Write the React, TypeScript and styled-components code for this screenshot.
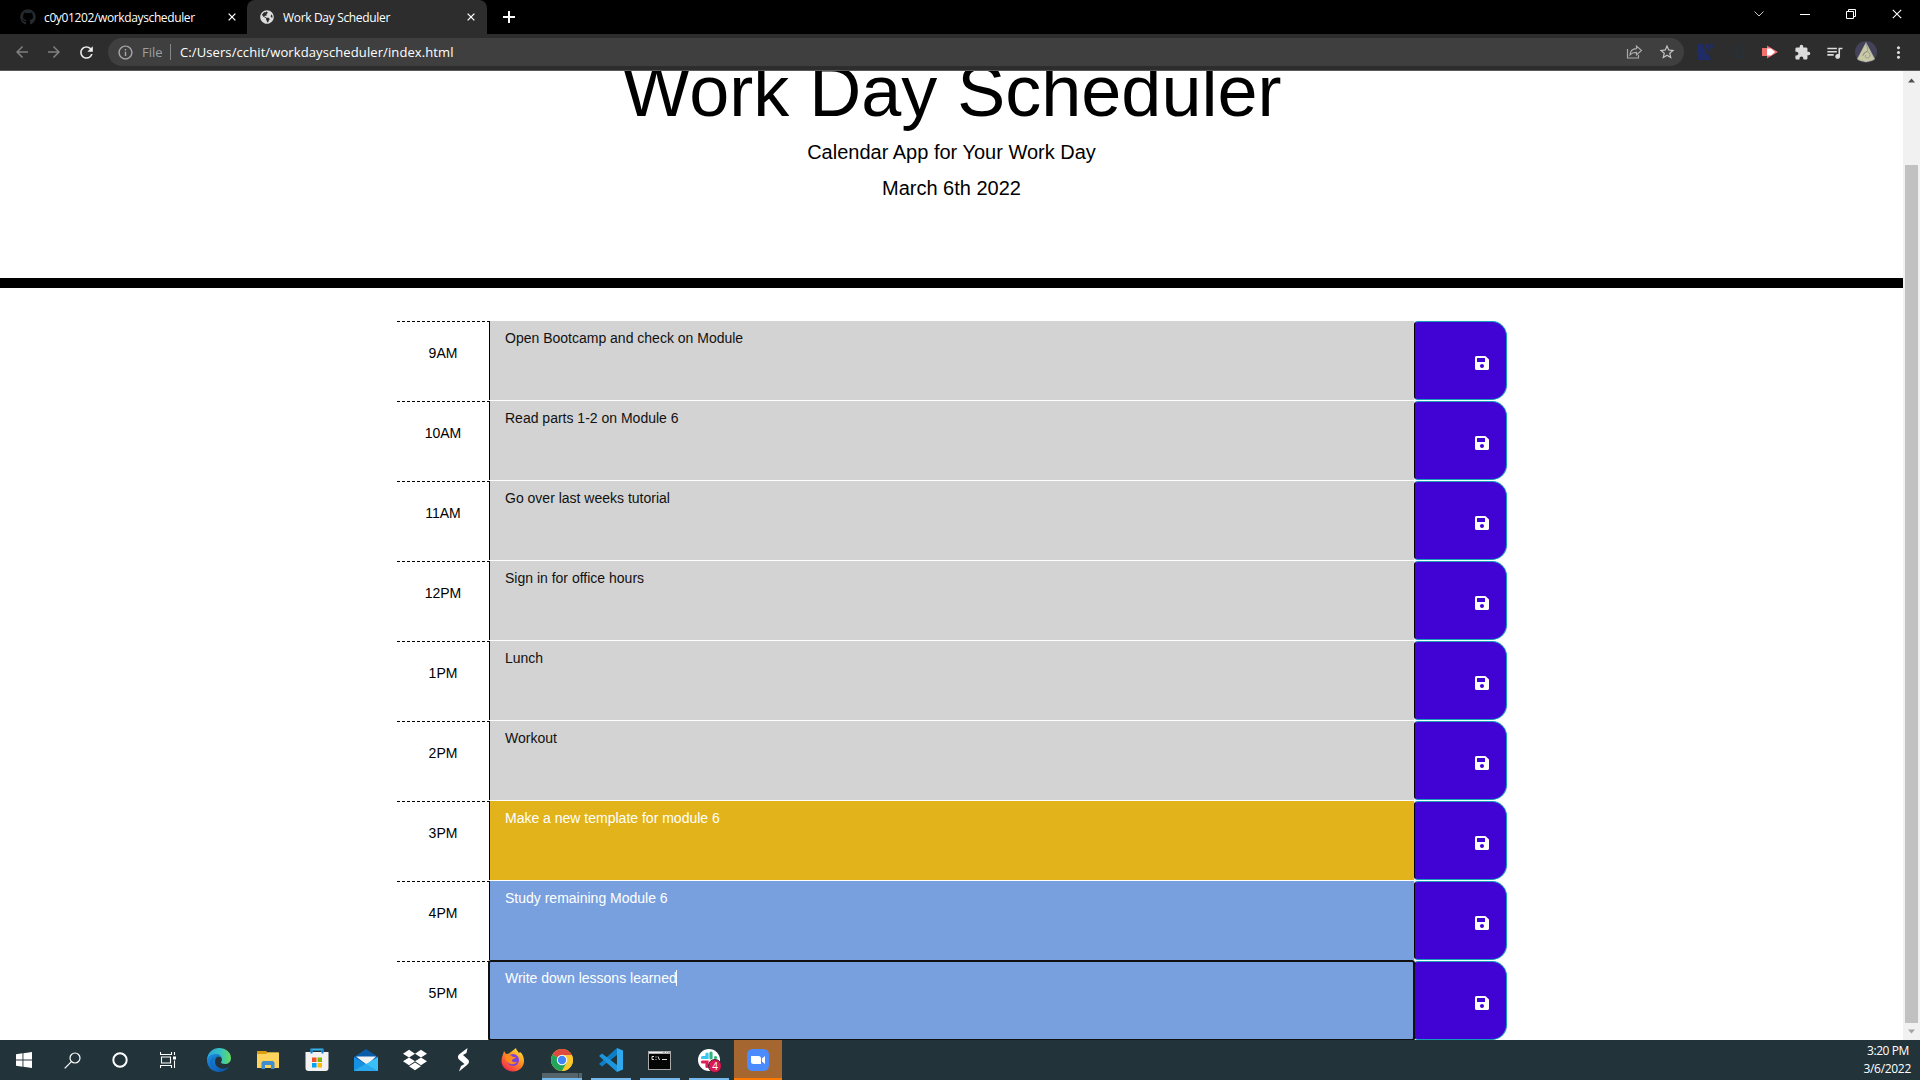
import React from "react";
import styled, { createGlobalStyle } from "styled-components";
import { FaGithub, FaSave, FaDropbox, FaGlobeAmericas } from "react-icons/fa";
import { MdExtension, MdQueueMusic, MdRefresh, MdArrowBack, MdArrowForward, MdInfoOutline, MdStarBorder, MdMoreVert } from "react-icons/md";

const Global = createGlobalStyle`
  * { box-sizing: border-box; }
  html, body { margin: 0; padding: 0; overflow: hidden; }
  svg { display: block; flex: none; }
`;

const ui = `"Open Sans", "Noto Sans", sans-serif`;

const Screen = styled.div`
  width: 1920px; height: 1080px; display: flex; flex-direction: column; overflow: hidden;
  background: #fff; font-family: "Liberation Sans", Arial, sans-serif; color: #000;
`;
const TabStrip = styled.div`
  height: 34px; flex: none; background: #000; display: flex; font-family: ${ui};
`;
const Tab = styled.div<{ $active?: boolean }>`
  width: ${(p) => (p.$active ? 240 : 247)}px; height: 34px; display: flex; align-items: center;
  padding: ${(p) => (p.$active ? "0 12px 0 13px" : "0 11px 0 20px")};
  background: ${(p) => (p.$active ? "#2d2d2d" : "transparent")};
  border-radius: 8px 8px 0 0; color: #fff; font-size: 12px;
`;
const TabTitle = styled.span<{ $gap: number; $spacing: number }>`
  margin-left: ${(p) => p.$gap}px; flex: 1; white-space: nowrap; letter-spacing: ${(p) => p.$spacing}px;
`;
const NewTab = styled.div`width: 44px; display: flex; align-items: center; justify-content: center;`;
const WindowButtons = styled.div`
  margin-left: auto; display: flex; height: 28px;
`;
const WindowButton = styled.div`width: 46px; display: flex; align-items: center; justify-content: center;`;

const Toolbar = styled.div`
  height: 37px; flex: none; background: #2d2d2d; border-bottom: 1px solid #5a5a5a;
  display: flex; align-items: center; font-family: ${ui};
`;
const NavButtons = styled.div`display: flex; gap: 14px; padding-left: 13px; width: 108px;`;
const Address = styled.div`
  width: 1576px; height: 28px; border-radius: 14px; background: #3f3f3f; display: flex; align-items: center;
  padding: 0 8px 0 9px; font-size: 13px; color: #fff;
`;
const Scheme = styled.span`color: #9aa0a6; margin-left: 8px; width: 28px; font-size: 13px; letter-spacing: 0;`;
const Divider = styled.span`width: 1px; height: 16px; background: #84878a; margin-right: 9px;`;
const Url = styled.span`flex: 1; letter-spacing: 0.1px;`;
const AddressIcons = styled.div`display: flex; gap: 15px; align-items: center;`;
const Extensions = styled.div`display: flex; align-items: center; padding-left: 6px;`;
const ExtensionSlot = styled.div`width: 32px; display: flex; justify-content: center;`;

const Viewport = styled.div`height: 969px; flex: none; display: flex; overflow: hidden;`;
const Page = styled.main`width: 1903px; flex: none;`;
const Hero = styled.header`
  height: 217px; border-bottom: 10px solid #000; text-align: center; overflow: hidden;
`;
const Title = styled.h1`font-size: 72px; font-weight: 400; line-height: 86px; margin: -23px 0 3px; padding-left: 1px;`;
const Lead = styled.p`font-size: 20px; line-height: 30px; margin: 0 0 6px;`;

const Schedule = styled.section`margin: 33px 0 0 397px; width: 1110px; font-size: 14px; line-height: 21px;`;
const Row = styled.div`display: grid; grid-template-columns: 93px 924px 93px; height: 80px;`;
const Hour = styled.div`
  height: 79px; border-top: 1px dashed #000; border-right: 1px solid #000; padding-top: 21px; text-align: center;
`;
const tones = {
  past: ["#d3d3d3", "#111"],
  present: ["#e2b31b", "#fff"],
  future: ["#78a0de", "#fff"],
};
type Tone = keyof typeof tones;
const Task = styled.div<{ $tone: Tone; $focused: boolean }>`
  height: 79px; padding: 7px 15px; display: flex; align-items: flex-start;
  background: ${(p) => tones[p.$tone][0]}; color: ${(p) => tones[p.$tone][1]};
  ${(p) => p.$focused && "outline: 2px solid #101010; outline-offset: -1px; border-radius: 2px; margin: 0 0 0 -1px; padding-left: 16px; position: relative; z-index: 1;"}
`;
const Caret = styled.span`width: 1px; height: 16px; margin: 2px 0 0 -1px; background: #fff;`;
const Save = styled.button`
  height: 79px; border: 1px solid #14a0bb; border-left-color: #000; border-radius: 4px 15px 15px 4px; background: #4103d4;
  color: #fff; display: flex; align-items: center; justify-content: flex-end; padding: 5px 16px 0 0;
`;

const Scrollbar = styled.div`
  width: 17px; background: #f1f1f1; display: flex; flex-direction: column; align-items: center; padding: 7px 0 7px;
`;
const Thumb = styled.div`width: 13px; height: 858px; margin: 82px 0 6px; background: #c1c1c1; flex: none;`;

const Taskbar = styled.footer`
  height: 40px; flex: none; display: flex; background: #22333a; color: #fff; font-family: ${ui};
`;
const SystemSlot = styled.div`width: 48px; display: flex; align-items: center; justify-content: center;`;
const Apps = styled.div`display: flex; margin-left: 3px;`;
const AppSlot = styled.div<{ $state?: "open" | "stacked" | "alert" }>`
  width: 49px; height: 40px; display: flex; justify-content: center; align-items: center; position: relative;
  padding-right: ${(p) => (p.$state === "alert" ? 0 : 2)}px;
  ${(p) => p.$state === "alert" && "background: #a5672f; width: 48px;"}
  &::before {
    content: ""; position: absolute; bottom: 2px; left: 4px; width: 40px; height: 5px;
    background: ${(p) => (p.$state === "stacked" ? "linear-gradient(90deg, #56646b 36px, #36464d 36px 37px, #56646b 37px)" : "none")};
  }
  &::after {
    content: ""; position: absolute; bottom: 0; height: 2px;
    left: ${(p) => (p.$state === "alert" ? 0 : 4)}px; width: ${(p) => (p.$state === "alert" ? 48 : 40)}px;
    background: ${(p) => (p.$state === "alert" ? "#ff7800" : p.$state ? "#76b9ed" : "none")};
  }
`;
const Badge = styled.span`
  position: absolute; left: 23px; top: 19px; width: 14px; height: 14px; border-radius: 50%; background: #d81b55;
  border: 1px solid #4b1a30; font-size: 10px; line-height: 12px; text-align: center;
`;
const Clock = styled.div`
  margin-left: auto; width: 80px; padding: 2px 9px 0 0; font-size: 12px; line-height: 18px; text-align: right; letter-spacing: -0.3px;
`;
const Time = styled.div`padding-right: 2px; letter-spacing: -0.4px;`;

const Close = ({ s = 8, w = 1.6 }: { s?: number; w?: number }) => (
  <svg width={s} height={s} viewBox="0 0 10 10" stroke="#fff" strokeWidth={w}><path d="M.8.8l8.4 8.4M9.2.8L.8 9.2" /></svg>
);

const ShareIcon = () => (
  <svg width="17" height="16" viewBox="0 0 17 16" fill="none" stroke="#aaa" strokeWidth="1.2">
    <path d="M1.5 5v9h11v-3" /><path d="M4 10.8c.3-4 2.500-6 6.500-6.200V2l5 4.500-5 4.500V8.400C7.500 8.300 5.500 9 4 10.800z" />
  </svg>
);
const WordExtension = () => (
  <svg width="16" height="16" viewBox="0 0 16 16" fill="#1f2c66"><path d="M0 0h4.500l1.500 5V16H0zM6.500 0H10l2.500 7-1.500 1zM11.500 0H16l-2.500 6.500zM6 3l3 8 1-1 3.500 6H6z" /></svg>
);
const DimExtension = () => (
  <svg width="16" height="16" viewBox="0 0 16 16" fill="none" stroke="#26323b" strokeWidth="1.300"><circle cx="7.500" cy="7.500" r="6" /><path d="M5 9l2-4 1 5 2-4M12 12l3 3" /></svg>
);
const ArrowExtension = () => (
  <svg width="16" height="16" viewBox="0 0 16 16"><path d="M0 4h5V1.500L16 8 5 14.500V12H0z" fill="#f26f6f" /><path d="M5 4.500h4L13 8l-4 3.500H5z" fill="#fff" /></svg>
);
const Avatar = () => (
  <svg width="22" height="22" viewBox="0 0 22 22"><circle cx="11" cy="11" r="11" fill="#434258" /><path d="M11 1L2 18c3 3.500 15 3.500 18 0z" fill="#b0b09c" /><path d="M11 2L6 12l-3 6 8 3 8-3z" fill="#c9c9a6" /><path d="M11 2l2 7-5 5M8 15c0-5 7-6 7-1s-7 3-4 0" stroke="#8b8c93" strokeWidth=".8" fill="none" /></svg>
);

const WindowsIcon = () => (
  <svg width="16" height="16" viewBox="0 0 16 16" fill="#fff"><path d="M0 2.200l6.500-.9v6.200H0zM7.400 1.200L16 0v7.500H7.400zM0 8.400h6.500v6.300L0 13.800zM7.400 8.400H16V16l-8.600-1.200z" /></svg>
);
const SearchIcon = () => (
  <svg width="17" height="17" viewBox="0 0 17 17" fill="none" stroke="#fff" strokeWidth="1.200"><circle cx="11" cy="6" r="5" /><path d="M7.400 9.600L.7 16.300" /></svg>
);
const TaskViewIcon = () => (
  <svg width="17" height="16" viewBox="0 0 17 16" fill="none" stroke="#fff" strokeWidth="1.100"><path d="M.5 0v2.500h11V0M.5 16v-2.500h11V16M1.500 5h9v6h-9zM14.500 0v3M14.500 8.500V16" /><path d="M13 4.500h3v3h-3z" fill="#fff" stroke="none" /></svg>
);
const EdgeIcon = () => (
  <svg width="24" height="24" viewBox="0 0 24 24">
    <defs>
      <linearGradient id="edgeTop" x1="0" x2="1"><stop offset="0" stopColor="#2aa3dc" /><stop offset=".55" stopColor="#35c1c4" /><stop offset="1" stopColor="#66dc5c" /></linearGradient>
      <linearGradient id="edgeLow" x2="1" y2="1"><stop offset="0" stopColor="#1b91e0" /><stop offset="1" stopColor="#0b4da2" /></linearGradient>
    </defs>
    <path d="M0 11C1 4 6 0 12 0c7 0 12 4.500 12 10 0 4-3 6-6 6-2.500 0-4.500-1-4-2 2-2 1-6-4-6-4 0-8 1-10 5z" fill="url(#edgeTop)" />
    <path d="M0 12c1-4 5-6 9-6 3 0 6 2 6 5 0-1.500-1.500-2.500-3-2.500-2.500 0-4 2-4 5 0 5 5 8 10 7 2-.4 3-1 4-1.700C20 22 16 24 12 24 5 24 0 19 0 12z" fill="url(#edgeLow)" />
    <path d="M9 9c-3 2-4 5-3 8 1 4 4 6 7 6.800C7 23 3 19 3 15c0-3 2-5.500 6-6z" fill="#126cc0" opacity=".7" />
  </svg>
);
const FolderIcon = () => (
  <svg width="22" height="18" viewBox="0 0 22 18"><path d="M0 0h9l1.500 1.500H21V8H0z" fill="#dd9b10" /><path d="M0 3h9l1.500-1.500H22V17H0z" fill="#fdd35e" /><path d="M4.500 18v-6.500l1.500-1.500h10l1.500 1.500V18h-3.500v-4H8v4z" fill="#3e8ed0" /></svg>
);
const StoreIcon = () => (
  <svg width="24" height="24" viewBox="0 0 24 24"><path d="M6.500 6V1.500h11V6" fill="none" stroke="#35b5f0" strokeWidth="2" /><path d="M.5 4h23v16q0 3-3 3h-17q-3 0-3-3z" fill="#f2f2f2" /><path d="M6.500 1.500V5.500M17.500 1.500V5.500" stroke="#1482d0" strokeWidth="2" /><path d="M7 9.500h4.500V14H7z" fill="#f25022" /><path d="M12.500 9.500H17V14h-4.500z" fill="#7fba00" /><path d="M7 15h4.500v4.500H7z" fill="#00a4ef" /><path d="M12.500 15H17v4.500h-4.500z" fill="#ffb900" /></svg>
);
const MailIcon = () => (
  <svg width="24" height="22" viewBox="0 0 24 22"><path d="M0 8l12-8 12 8v5H0z" fill="#0a5cab" /><path d="M2 7.500h20L13 16z" fill="#f2f2f2" /><path d="M0 8l12 7v7H0z" fill="#1691e2" /><path d="M24 8v14H0z" fill="#38c0f7" /><path d="M12 15l12 7H0z" fill="#2aa9ee" /></svg>
);
const SIcon = () => (
  <svg width="14" height="24" viewBox="0 0 14 24" fill="#fff"><path d="M10.500 0L2 6.500C.5 8 .5 10 2 11.500L7.500 16 4 18l-2 5.500 8-6.500c2.500-2 2.500-4 1-5.500L6 7l3.500-2z" /></svg>
);
const FirefoxIcon = () => (
  <svg width="24" height="24" viewBox="0 0 24 24">
    <defs><linearGradient id="fox" x1=".9" y1="0" x2=".2" y2="1"><stop offset="0" stopColor="#fff14a" /><stop offset=".4" stopColor="#ff9a1f" /><stop offset="1" stopColor="#f5234f" /></linearGradient></defs>
    <path d="M3 3l2 3 3-.5L15 0c0 2 2 3 3 5l1-1c3 2 4 6 4 9 0 6-5 10.500-11 10.500S.5 19 .5 13C.5 9 2 7 3 3z" fill="url(#fox)" />
    <circle cx="12" cy="12" r="6" fill="#7a42dd" /><path d="M4 8c3-2 7-1 8 1h3c-1 2-4 2-4 3.500 0 2 3 2 5 1-1 3-6 4-9 1-2-2-3-4-3-6.500z" fill="#ff8a1c" />
  </svg>
);
const ChromeIcon = () => (
  <svg width="22" height="22" viewBox="0 0 22 22"><circle cx="11" cy="11" r="11" fill="#fbc82e" /><path d="M11 11L1.500 5.500a11 11 0 0119 0z" fill="#df4a3e" /><path d="M1.500 5.500A11 11 0 0011 22l5-8.500L11 11z" fill="#23a45a" /><path d="M11 6h9.800A11 11 0 0122 11a11 11 0 01-11 11l4.700-8.500z" fill="#fbc82e" /><circle cx="11" cy="11" r="5.200" fill="#fff" /><circle cx="11" cy="11" r="4.200" fill="#4385f5" /></svg>
);
const CodeIcon = () => (
  <svg width="24" height="24" viewBox="0 0 24 24"><path d="M18 0v7L3 18.500 0 16z" fill="#0c7fc6" /><path d="M18 24v-7L3 5.500 0 8z" fill="#1b95dd" /><path d="M18 0l6 2.500v19L18 24z" fill="#2fa8ee" /></svg>
);
const TerminalIcon = () => (
  <svg width="23" height="19" viewBox="0 0 23 19"><path d="M0 0h23v19H0z" fill="#aaa" /><path d="M1 3h21v15H1z" fill="#050505" /><path d="M1 1h14v1H1zM17 1h1v1h-1zM19 1h1v1h-1z" fill="#eee" /><path d="M6 5.500H4v3h2M8 5.500v1M8 8v1M10 5.500l1.500 3.500M14 8.500h5" fill="none" stroke="#ddd" /></svg>
);
const SlackIcon = () => (
  <svg width="22" height="22" viewBox="0 0 22 22" strokeWidth="3.200" strokeLinecap="round"><circle cx="11" cy="11" r="11" fill="#fff" /><path d="M9 5v3.500H4.500" stroke="#36c5f0" fill="none" /><path d="M13 4v5M17.500 8.500h.1" stroke="#2eb67d" /><path d="M4.500 13h4.500v4.500" stroke="#e01e5a" fill="none" /><path d="M13 13h5M13 17.500v.1" stroke="#ecb22e" /></svg>
);
const ZoomIcon = () => (
  <svg width="22" height="22" viewBox="0 0 22 22"><rect width="22" height="22" rx="5.500" fill="#4a8cff" /><path d="M4 7h7.500q2.500 0 2.500 2.500V15H6.500Q4 15 4 12.500zM15 9.500L18 7v8l-3-2.500z" fill="#fff" /></svg>
);

const rows: { hour: string; text: string; tone: Tone }[] = [
  { hour: "9AM", text: "Open Bootcamp and check on Module", tone: "past" },
  { hour: "10AM", text: "Read parts 1-2 on Module 6", tone: "past" },
  { hour: "11AM", text: "Go over last weeks tutorial", tone: "past" },
  { hour: "12PM", text: "Sign in for office hours", tone: "past" },
  { hour: "1PM", text: "Lunch", tone: "past" },
  { hour: "2PM", text: "Workout", tone: "past" },
  { hour: "3PM", text: "Make a new template for module 6", tone: "present" },
  { hour: "4PM", text: "Study remaining Module 6", tone: "future" },
  { hour: "5PM", text: "Write down lessons learned", tone: "future" },
];

const apps: { name: string; icon: React.ReactNode; state?: "open" | "stacked" | "alert" }[] = [
  { name: "edge", icon: <EdgeIcon /> },
  { name: "files", icon: <FolderIcon /> },
  { name: "store", icon: <StoreIcon /> },
  { name: "mail", icon: <MailIcon /> },
  { name: "dropbox", icon: <FaDropbox size={24} /> },
  { name: "s", icon: <SIcon /> },
  { name: "firefox", icon: <FirefoxIcon /> },
  { name: "chrome", icon: <ChromeIcon />, state: "stacked" },
  { name: "code", icon: <CodeIcon />, state: "open" },
  { name: "terminal", icon: <TerminalIcon />, state: "open" },
  { name: "slack", icon: <><SlackIcon /><Badge>4</Badge></>, state: "open" },
  { name: "zoom", icon: <ZoomIcon />, state: "alert" },
];

export default function App() {
  return (
    <Screen>
      <Global />
      <TabStrip>
        <Tab>
          <FaGithub size={16} color="#24292e" />
          <TabTitle $gap={8} $spacing={-0.37}>c0y01202/workdayscheduler</TabTitle>
          <Close />
        </Tab>
        <Tab $active>
          <FaGlobeAmericas size={14} color="#dcdcdc" />
          <TabTitle $gap={9} $spacing={-0.33}>Work Day Scheduler</TabTitle>
          <Close />
        </Tab>
        <NewTab>
          <svg width="12" height="12" viewBox="0 0 12 12" stroke="#fff" strokeWidth="2"><path d="M6 0v12M0 6h12" /></svg>
        </NewTab>
        <WindowButtons>
          <WindowButton><svg width="10" height="6" viewBox="0 0 10 6" fill="none" stroke="#ccc"><path d="M.5.5L5 5 9.500.5" /></svg></WindowButton>
          <WindowButton><svg width="10" height="1"><path d="M0 0h10v1H0z" fill="#fff" /></svg></WindowButton>
          <WindowButton><svg width="10" height="10" viewBox="0 0 10 10" fill="none" stroke="#fff"><path d="M.5 2.500h7v7h-7zM2.500 2.500v-2h7v7h-2" /></svg></WindowButton>
          <WindowButton><Close s={10} w={1.1} /></WindowButton>
        </WindowButtons>
      </TabStrip>
      <Toolbar>
        <NavButtons>
          <MdArrowBack size={18} color="#808080" />
          <MdArrowForward size={18} color="#808080" />
          <MdRefresh size={19} color="#eee" />
        </NavButtons>
        <Address>
          <MdInfoOutline size={17} color="#a5a8ab" />
          <Scheme>File</Scheme>
          <Divider />
          <Url>C:/Users/cchit/workdayscheduler/index.html</Url>
          <AddressIcons>
            <ShareIcon />
            <MdStarBorder size={18} color="#c4c4c4" />
          </AddressIcons>
        </Address>
        <Extensions>
          <ExtensionSlot><WordExtension /></ExtensionSlot>
          <ExtensionSlot><DimExtension /></ExtensionSlot>
          <ExtensionSlot><ArrowExtension /></ExtensionSlot>
          <ExtensionSlot><MdExtension size={17} color="#dcdcdc" /></ExtensionSlot>
          <ExtensionSlot><MdQueueMusic size={19} color="#dcdcdc" /></ExtensionSlot>
          <ExtensionSlot><Avatar /></ExtensionSlot>
          <ExtensionSlot><MdMoreVert size={19} color="#ddd" /></ExtensionSlot>
        </Extensions>
      </Toolbar>
      <Viewport>
        <Page>
          <Hero>
            <Title>Work Day Scheduler</Title>
            <Lead>Calendar App for Your Work Day</Lead>
            <Lead>March 6th 2022</Lead>
          </Hero>
          <Schedule>
            {rows.map((r, i) => (
              <Row key={r.hour}>
                <Hour>{r.hour}</Hour>
                <Task $tone={r.tone} $focused={i === rows.length - 1}>
                  {r.text}
                  {i === rows.length - 1 && <Caret />}
                </Task>
                <Save><FaSave size={16} /></Save>
              </Row>
            ))}
          </Schedule>
        </Page>
        <Scrollbar>
          <svg width="7" height="5" viewBox="0 0 7 5"><path d="M0 4.500L3.500 .5 7 4.500z" fill="#505050" /></svg>
          <Thumb />
          <svg width="7" height="5" viewBox="0 0 7 5"><path d="M0 .5L3.500 4.500 7 .5z" fill="#a3a3a3" /></svg>
        </Scrollbar>
      </Viewport>
      <Taskbar>
        <SystemSlot><WindowsIcon /></SystemSlot>
        <SystemSlot><SearchIcon /></SystemSlot>
        <SystemSlot><svg width="16" height="16"><circle cx="8" cy="8" r="6.700" fill="none" stroke="#fff" strokeWidth="2" /></svg></SystemSlot>
        <SystemSlot><TaskViewIcon /></SystemSlot>
        <Apps>
          {apps.map((a) => <AppSlot key={a.name} $state={a.state}>{a.icon}</AppSlot>)}
        </Apps>
        <Clock><Time>3:20 PM</Time><div>3/6/2022</div></Clock>
      </Taskbar>
    </Screen>
  );
}
